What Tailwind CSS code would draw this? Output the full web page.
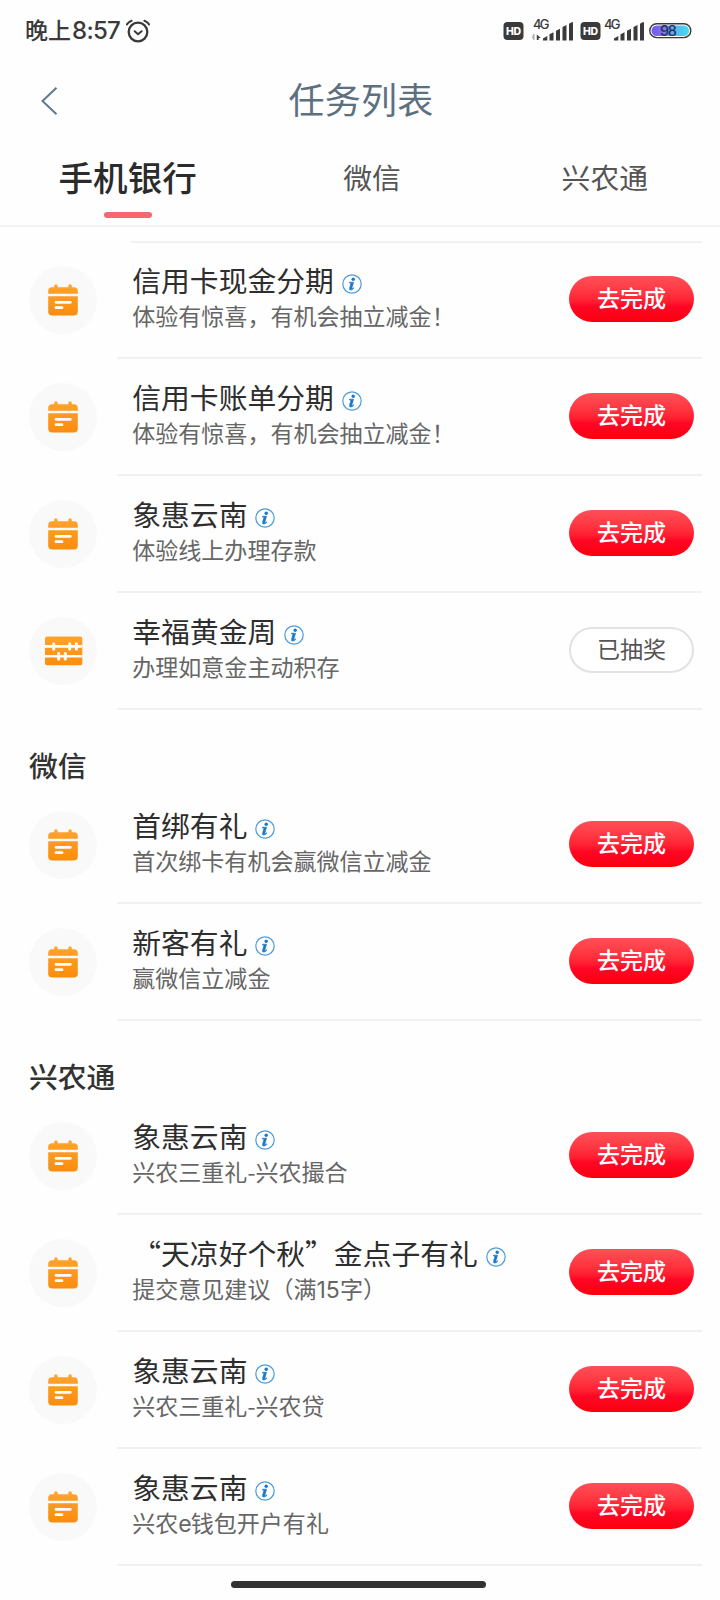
<!DOCTYPE html>
<html lang="zh-CN">
<head>
<meta charset="utf-8">
<title>任务列表</title>
<script src="https://cdn.jsdelivr.net/npm/@tailwindcss/browser@4"></script>
</head>
<body class="w-[720px] h-[1600px] overflow-hidden bg-[#fefefe] font-['Noto_Sans_CJK_SC',sans-serif] text-[#333]">
<svg class="absolute h-0 w-0">
  <defs>
    <linearGradient id="orange" x1="0" y1="18" x2="0" y2="50" gradientUnits="userSpaceOnUse"><stop offset="0" stop-color="#ffa42e"/><stop offset="1" stop-color="#fb8c0c"/></linearGradient>
    <symbol id="calendar" viewBox="0 0 68 68">
      <path fill="url(#orange)" d="M19.2 27.7V25a3.8 3.8 0 0 1 3.8-3.8h2.2V20a1.700 1.700 0 0 1 3.400 0v1.2h10.800V20a1.700 1.700 0 0 1 3.400 0v1.2H45a3.8 3.8 0 0 1 3.8 3.8v2.7z"/>
      <path fill="url(#orange)" d="M19.2 30.3h29.6v15.2a4 4 0 0 1-4 4H23.2a4 4 0 0 1-4-4z"/>
      <path stroke="#fff" stroke-width="2.8" stroke-linecap="round" d="M27 36.3h14.400M27 41.700h6"/>
    </symbol>
    <symbol id="abacus" viewBox="0 0 68 68">
      <rect x="16" y="19.500" width="37.300" height="28.800" rx="2" fill="url(#orange)"/>
      <path stroke="#fff" stroke-width="2.600" d="M16 29.400h37.300M16 39.200h37.300"/>
      <path stroke="#fff" stroke-width="3" stroke-linecap="round" d="M24.700 26.700v5.200M40.700 26.700v5.200M47.300 26.700v5.200M29.700 36.500v5.400M36.300 36.500v5.400"/>
    </symbol>
    <symbol id="info" viewBox="0 0 20 20">
      <circle cx="10" cy="10" r="9.200" fill="#fff" stroke="#4d9bdc" stroke-width="1.200"/>
      <circle cx="11.200" cy="5.300" r="1.700" fill="#1878cc"/>
      <path fill="#1878cc" stroke="#1878cc" stroke-width=".6" d="M7.500 8.200h4.100l-1.700 5.900q-.2.800.3.700.6-.1 1.300-1.100l.5.300q-1.300 2.100-3.200 2.100-1.700 0-1.300-1.700l1.200-4.400q.2-.8-.4-.9l-.9-.1z"/>
    </symbol>
  </defs>
</svg>

<div class="flex h-[62px] items-center justify-between pl-[25px] pr-[28px] text-[#3a3a3a]">
  <div class="flex items-center">
    <span class="mb-[3px] text-[23px] leading-none font-medium">晚上</span>
    <span class="ml-[1px] w-[49px] font-['Inter'] text-[24px] leading-none font-medium tracking-[-0.7px] whitespace-nowrap">8:57</span>
    <svg class="ml-[5px] h-6 w-6" viewBox="0 0 24 24" fill="none" stroke="currentColor" stroke-linecap="round">
      <circle cx="12" cy="13" r="9.300" stroke-width="2.300"/>
      <path stroke-width="2" d="M8.700 12.200l3.300 3 3.600-3M.900 5.400Q2.500 3 5.600 1.800M23.100 5.400Q21.500 3 18.400 1.800"/>
    </svg>
  </div>
  <svg class="h-[30px] w-[189px]" viewBox="503 16 189 30">
    <rect x="503.500" y="22" width="20" height="18" rx="4" fill="#3a3a3a"/>
    <text x="513.500" y="34.800" text-anchor="middle" font-family="Inter" font-weight="800" font-size="10.500" fill="#fff" textLength="15">HD</text>
    <text x="533" y="29" font-family="Inter" font-weight="500" font-size="13" fill="#3a3a3a" textLength="16.500">4G</text>
    <path fill="#aaa" d="M531.500 36.500h1.400V34h1.500v6h-.8z"/>
    <path fill="#3a3a3a" d="M536.800 34.500l4 3.500h-2.200v2h-1.800z"/>
    <g id="bars" fill="#3a3a3a"><path d="M543 40.500v-2l4.300-2.500v4.500zM549.500 34.300l4-2v8.200h-4zM556 30.700l4-2v11.800h-4zM562.500 27l4-2v15.500h-4zM569 23.800l3.200-1.800 .8.500v18h-4z"/></g>
    <rect x="580.500" y="22" width="20" height="18" rx="4" fill="#3a3a3a"/>
    <text x="590.500" y="34.800" text-anchor="middle" font-family="Inter" font-weight="800" font-size="10.500" fill="#fff" textLength="15">HD</text>
    <text x="604" y="29" font-family="Inter" font-weight="500" font-size="13" fill="#3a3a3a" textLength="16.500">4G</text>
    <use href="#bars" x="71"/>
    <linearGradient id="charge"><stop offset="0" stop-color="#7657ef"/><stop offset=".3" stop-color="#7c72f0"/><stop offset=".6" stop-color="#59b5ee"/><stop offset="1" stop-color="#43dcf0"/></linearGradient>
    <rect x="649.800" y="23.800" width="41" height="13.800" rx="6.900" fill="#fff" stroke="#3a3a3a" stroke-width="1.400"/>
    <rect x="651.500" y="25.500" width="37.600" height="10.400" rx="5.200" fill="url(#charge)"/>
    <text x="668.500" y="36" text-anchor="middle" font-family="Inter" font-weight="500" font-size="14.500" fill="#24305a" textLength="17">98</text>
  </svg>
</div>

<header class="grid h-[78px] grid-cols-[100px_1fr_100px] items-center">
  <svg class="ml-[40px] h-7 w-[18px]" viewBox="0 0 18 28" fill="none" stroke="#5f7a90" stroke-width="2"><path d="M16.500 .8L2.500 14l14 13.200"/></svg>
  <h1 class="pb-[7px] pl-[2px] text-center text-[36px] leading-none text-[#5c7080] tracking-[0.3px]">任务列表</h1>
</header>

<nav class="flex h-[87px] border-b-2 border-[#f2f2f2] text-[28.800px] text-[#555]">
  <div class="flex w-[256px] flex-col items-center">
    <span class="mt-[13px] h-[46px] text-[34.560px] leading-[46px] font-medium text-[#2b2b2b]">手机银行</span>
    <span class="mt-[13px] h-[6px] w-[48px] rounded-full bg-[#fa6670]"></span>
  </div>
  <span class="mt-[14px] w-[230px] pl-[4px] text-center leading-[46px]">微信</span>
  <span class="mt-[14px] w-[236px] pl-[5px] text-center leading-[46px]">兴农通</span>
</nav>

<main id="list"></main>

<div class="flex h-[34px] justify-center pr-[3px] pt-[15px]"><div class="h-[7px] w-[255px] rounded-full bg-[#333]"></div></div>

<script>
const groups = [
  { rows: [
    ['信用卡现金分期', '体验有惊喜，有机会抽立减金！'],
    ['信用卡账单分期', '体验有惊喜，有机会抽立减金！'],
    ['象惠云南', '体验线上办理存款'],
    ['幸福黄金周', '办理如意金主动积存', 'abacus'],
  ] },
  { name: '微信', rows: [
    ['首绑有礼', '首次绑卡有机会赢微信立减金'],
    ['新客有礼', '赢微信立减金'],
  ] },
  { name: '兴农通', rows: [
    ['象惠云南', '兴农三重礼-兴农撮合'],
    ['“天凉好个秋”金点子有礼', '提交意见建议（满<span class="font-[\'Inter\']">15</span>字）'],
    ['象惠云南', '兴农三重礼-兴农贷'],
    ['象惠云南', '兴农<span class="-mr-[1px] font-[\'Inter\']">e</span>钱包开户有礼'],
  ] },
];
const todo = '<button class="mt-[34px] h-[46px] w-[125px] rounded-full bg-linear-to-b from-[#ff4f58] via-[#ff0626] via-65% to-[#fb0008] pb-[2px] text-[23.040px] leading-none font-medium text-white">去完成</button>';
const done = '<button class="mt-[34px] h-[46px] w-[125px] rounded-full border-2 border-[#e2e2e2] bg-white pb-[2px] text-[23.040px] leading-none text-[#555]">已抽奖</button>';
const row = ([title, note, icon]) => `
  <div class="flex h-[117px] pl-[29px]">
    <div class="mt-[24px] h-[68px] w-[68px] rounded-full bg-[#f9f9f9]"><svg class="h-[68px] w-[68px]"><use href="#${icon || 'calendar'}"/></svg></div>
    <div class="ml-[20px] flex w-[585px] justify-between border-b-2 border-[#f1f1f1] pr-[8px] pl-[15.250px]">
      <div class="pt-[20px] whitespace-nowrap">
        <div class="flex h-[36px] items-center gap-2 text-[28.800px] leading-[36px] text-[#2e2e2e]">${title}<svg class="mt-[7px] h-5 w-5"><use href="#info"/></svg></div>
        <div class="h-[36px] text-[23.040px] leading-[35px] text-[#666]">${note}</div>
      </div>
      ${icon ? done : todo}
    </div>
  </div>`;
document.getElementById('list').innerHTML =
  '<div class="-mb-[1px] ml-[131px] mt-[14px] h-[2px] w-[571px] bg-[#f1f1f1]"></div>' +
  groups.map(g => (g.name ? `<h2 class="h-[77px] pl-[29px] pt-[35px] text-[28.800px] leading-[40px] font-medium">${g.name}</h2>` : '') + g.rows.map(row).join('')).join('');
</script>
</body>
</html>
